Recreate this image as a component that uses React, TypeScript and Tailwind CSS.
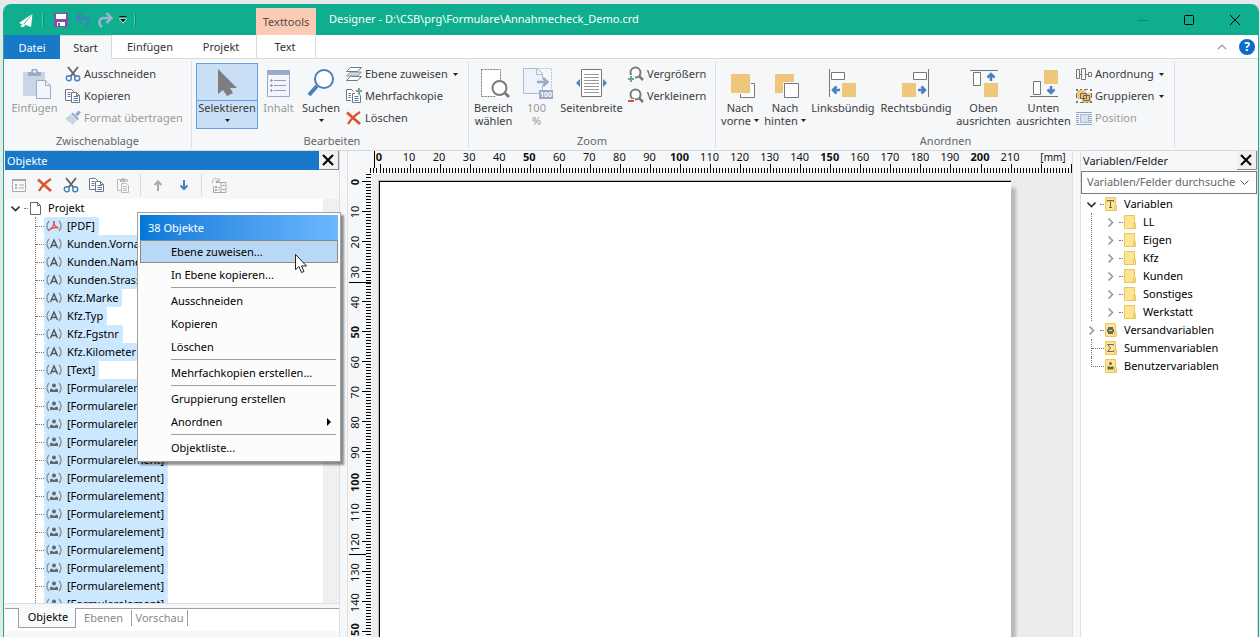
import { ReactNode } from "react";

interface Kids {
    children: ReactNode;
}

interface SvgProps {
    w: number;
    h: number;
    children: ReactNode;
    className?: string;
}

const Svg = ({ w, h, children, className = "" }: SvgProps) => (
    <svg width={w} height={h} viewBox={`0 0 ${w} ${h}`} fill="none" className={`shrink-0 ${className}`} aria-hidden="true">
        {children}
    </svg>
)

/* ---------- icons 16px ---------- */

const Scissors = () => (
    <Svg w={16} h={16}>
        <path d="M3 1l7.5 9.5M13 1L5.5 10.5" stroke="#666" strokeWidth="2" />
        <circle cx="3.8" cy="12.2" r="2.5" stroke="#4a80bd" strokeWidth="1.4" />
        <circle cx="12.2" cy="12.2" r="2.5" stroke="#4a80bd" strokeWidth="1.4" />
    </Svg>
)

const Copy = () => (
    <Svg w={16} h={16}>
        <path d="M6.5 12.5h-6v-11h6l2 2v1" stroke="#777" fill="#fff" />
        <path d="M2.5 4.5h3M2.5 6.5h3M2.5 8.5h3" stroke="#4a80bd" />
        <path d="M6.5 4.5h5l3 3v7h-8z" stroke="#777" fill="#fff" />
        <path d="M11.5 4.5v3h3" stroke="#777" />
        <path d="M8.5 8.5h4.5M8.5 10.5h4.5M8.5 12.5h4.5" stroke="#4a80bd" />
    </Svg>
)

const Brush = () => (
    <Svg w={16} h={16}>
        <path d="M0.5 8.5l5-4 6 6-4 4.5c-1-2-2-2.5-3.5-3z" fill="#c9d3e6" />
        <path d="M6 4l1.5-1.5 6.5 6-1.5 2z" fill="#9aabc9" />
        <path d="M10 4l3.5-3.5 2.5 2L12.5 6.5z" fill="#9aabc9" />
    </Svg>
)

const Layers = () => (
    <Svg w={16} h={16}>
        <path d="M4.5 10.5h11l-4 4h-11z" stroke="#777" fill="#fff" />
        <path d="M4.5 6h11l-4 4h-11z" stroke="#8a97a8" fill="#c5d8ee" />
        <path d="M4.5 1.5h11l-4 4h-11z" stroke="#777" fill="#fff" />
    </Svg>
)

const MultiCopy = () => (
    <Svg w={16} h={16}>
        <path d="M5 12.5H0.5v-11h5l2 2" stroke="#777" fill="#fff" />
        <path d="M2.5 5.5h2.5M2.5 7.5h2.5M2.5 9.5h2.5" stroke="#4a80bd" />
        <path d="M6.5 5.5h5l3 2v7h-8z" stroke="#777" fill="#fff" />
        <path d="M8.5 8.5h4M8.5 10.5h4M8.5 12.5h4" stroke="#4a80bd" />
        <path d="M9 0h7v6H9z" fill="#f5f7f9" />
        <path d="M13 0v6M10 3h6" stroke="#6aa893" strokeWidth="2" />
    </Svg>
)

const RedX = () => (
    <Svg w={16} h={16}>
        <path d="M1 2.5L14 14" stroke="#da5430" strokeWidth="2.8" />
        <path d="M14 2C10 4.500 5 9 2 14" stroke="#da5430" strokeWidth="2.2" />
    </Svg>
)

const ZoomPlus = ({ minus = false }: { minus?: boolean }) => (
    <Svg w={16} h={16}>
        <circle cx="7.5" cy="6.5" r="5" stroke="#7b7b7b" strokeWidth="2" fill="#fff" />
        <path d="M11 10l4 4" stroke="#7b7b7b" strokeWidth="2.5" />
        {minus
            ? <><path d="M0 11h7v5H0z" fill="#f5f7f9" /><path d="M0 13h6" stroke="#da5430" strokeWidth="2" /></>
            : <><path d="M0 9h7v7H0z" fill="#f5f7f9" /><path d="M3 10v6M0 13h6" stroke="#6aa893" strokeWidth="2" /></>}
    </Svg>
)

const Arrange = () => (
    <Svg w={16} h={16}>
        <path d="M0.5 3.5h3v9h-3zM5.5 2.5h4v11h-4zM12.5 6.5h3v4h-3zM3.5 8.5h2M9.5 8.5h3" stroke="#777" />
    </Svg>
)

const GroupIcon = () => (
    <Svg w={16} h={16}>
        <path d="M1 2h9v9H1zM6 5h9v10H6z" fill="#eec77c" />
        <path d="M4.5 5.5h6v5h-6zM7.5 7.5h6v5h-6z" stroke="#6b6458" />
        <path d="M0 1h2v2H0zM14 1h2v2h-2zM0 13h2v2H0zM14 13h2v2h-2zM4 1h2v1H4zM8 1h4v1H8zM4 14h4v1H4zM10 14h2v1h-2zM0 5h1v5H0zM15 5h1v5h-1z" fill="#777" />
    </Svg>
)

const PositionIcon = () => (
    <Svg w={16} h={16}>
        <path d="M0 2.5h16M0 4.5h16M0 6.5h16M0 8.5h16M0 10.5h16M0 12.5h16M0 14.5h16" stroke="#8fa6c9" />
        <path d="M3 4h10v9H3z" fill="#f5f7f9" />
        <path d="M4.5 4.5h8v8h-8z" fill="#d6e1f2" stroke="#a9bbd8" />
    </Svg>
)

const Caret = ({ className = "" }: { className?: string }) => (
    <Svg w={5} h={3} className={className}>
        <path d="M0 0h5L2.5 3z" fill="#222" />
    </Svg>
)

/* ---------- icons 32px ---------- */

const Paste = () => (
    <Svg w={32} h={32}>
        <path d="M4 4h22v10h-9v14H4z" fill="#ccd5e6" />
        <path d="M9 4h3l1-3h5l1 3h3v4H9z" fill="#9aabc9" />
        <path d="M14 2.5h3v2h-3z" fill="#fff" />
        <path d="M17.5 12.5h9l5 5v13h-14z" fill="#f2f5fb" stroke="#9aabc9" />
        <path d="M26.5 12.5v5h5" stroke="#9aabc9" />
    </Svg>
)

const Pointer = () => (
    <Svg w={32} h={32}>
        <path d="M7 1v25l5-4 4 6 6-3-3-5h7z" fill="#7d7d7d" />
    </Svg>
)

const Content = () => (
    <Svg w={32} h={32}>
        <path d="M4.5 2.5h22v26h-22z" fill="#f2f5fb" stroke="#9aabc9" />
        <path d="M4 2h23v5H4z" fill="#9aabc9" />
        <path d="M11 12.5h12M11 17.5h12M11 22.5h12M7 12.5h3M7 17.5h3M7 22.5h3" stroke="#8fa0bf" />
        <path d="M8 11h1v3H8zM8 16h1v3H8zM8 21h1v3H8z" fill="#8fa0bf" />
    </Svg>
)

const Search = () => (
    <Svg w={32} h={32}>
        <circle cx="19" cy="11" r="9" stroke="#4a80bd" strokeWidth="2" fill="#fff" />
        <path d="M12 18L4 27" stroke="#4a80bd" strokeWidth="4" />
    </Svg>
)

const ZoomArea = () => (
    <Svg w={32} h={32}>
        <path d="M3.5 1.5h19v27h-19z" fill="#fff" stroke="#777" strokeDasharray="2 1" />
        <circle cx="22" cy="21" r="9" fill="#fff" />
        <path d="M25 23l6 6" stroke="#7b7b7b" strokeWidth="3" />
        <circle cx="21.5" cy="20" r="7" fill="#fff" stroke="#7b7b7b" strokeWidth="2" />
    </Svg>
)

const ZoomFull = () => (
    <Svg w={32} h={32}>
        <path d="M16 0.5h14.5v21" stroke="#b9c6dd" strokeDasharray="2 1" />
        <path d="M2.5 0.5h14l5 5v20h-19z" fill="#edf2fb" stroke="#a9bbd8" />
        <path d="M15.5 0.5v6h6" stroke="#a9bbd8" />
        <path d="M16 10h12v8H16z" fill="#edf2fb" />
        <path d="M16 14h10M22 10l4.5 4-4.5 4" stroke="#9aabc9" strokeWidth="2.5" />
        <path d="M18 22h14v9H18z" fill="#9aabc9" />
        <text x="25" y="29" fontSize="7" fontWeight="700" fill="#fff" textAnchor="middle">100</text>
    </Svg>
)

const PageWidth = () => (
    <Svg w={32} h={32}>
        <path d="M5.5 1.5h20v27h-20z" fill="#fff" stroke="#777" />
        <path d="M8 6.5h15M8 9.5h15M8 12.5h15M8 15.5h15M8 18.5h15M8 21.5h15M8 24.5h15" stroke="#9a9a9a" />
        <path d="M4 11v8l-4-4zM27 11v8l4-4z" fill="#4a80bd" />
    </Svg>
)

const ToFront = () => (
    <Svg w={32} h={32}>
        <path d="M16.5 15.5h14v14h-14z" fill="#fff" stroke="#777" />
        <path d="M7 6h20v20H7z" fill="#f5f7f9" />
        <path d="M7 6h19v19H7z" fill="#eec77c" />
    </Svg>
)

const ToBack = () => (
    <Svg w={32} h={32}>
        <path d="M6 6h19v19H6z" fill="#eec77c" />
        <path d="M14 14h12v12H14z" fill="#f5f7f9" />
        <path d="M15.5 15.5h14v14h-14z" fill="#fff" stroke="#777" />
    </Svg>
)

const AlignLeft = () => (
    <Svg w={32} h={32}>
        <path d="M2.5 1v28" stroke="#777" />
        <path d="M4.5 4.5h13v7h-13z" stroke="#777" fill="#fff" />
        <path d="M15 15h14v14H15z" fill="#eec77c" />
        <path d="M13 22H6M9.5 18.5L6 22l3.5 3.5" stroke="#4a80bd" strokeWidth="2.5" />
    </Svg>
)

const AlignRight = () => (
    <Svg w={32} h={32}>
        <path d="M28.5 1v28" stroke="#777" />
        <path d="M13.5 4.5h13v7h-13z" stroke="#777" fill="#fff" />
        <path d="M2 15h14v14H2z" fill="#eec77c" />
        <path d="M18 22h7M21.5 18.5L25 22l-3.5 3.5" stroke="#4a80bd" strokeWidth="2.5" />
    </Svg>
)

const AlignTop = () => (
    <Svg w={32} h={32}>
        <path d="M2 2.5h28" stroke="#777" />
        <path d="M5.5 4.5h7v13h-7z" stroke="#777" fill="#fff" />
        <path d="M16 15h14v14H16z" fill="#eec77c" />
        <path d="M23 13V6M19.5 9.5L23 6l3.5 3.5" stroke="#4a80bd" strokeWidth="2.5" />
    </Svg>
)

const AlignBottom = () => (
    <Svg w={32} h={32}>
        <path d="M2 28.5h28" stroke="#777" />
        <path d="M5.5 13.5h7v13h-7z" stroke="#777" fill="#fff" />
        <path d="M16 2h14v14H16z" fill="#eec77c" />
        <path d="M23 18v7M19.5 21.5L23 25l3.5-3.5" stroke="#4a80bd" strokeWidth="2.5" />
    </Svg>
)

/* ---------- ribbon ---------- */

interface BigProps {
    icon: ReactNode;
    lines: string[];
    width: string;
    caret?: "below" | "inline";
    disabled?: boolean;
    active?: boolean;
}

const BigButton = ({ icon, lines, width, caret, disabled, active }: BigProps) => (
    <button
        disabled={disabled}
        className={`flex flex-col items-center h-[66px] shrink-0 whitespace-nowrap leading-[13px] border ${width} ${disabled ? "text-[#9a9a9a]" : "text-[#3c3c3c]"} ${active ? "bg-[#c9dff6] border-[#62a2e4]" : "border-transparent"}`}
    >
        <span className="pt-1">{icon}</span>
        <span className={`w-full flex flex-col items-center border-t ${active ? "border-[#62a2e4]" : "border-transparent"}`}>
            {lines.map((line, i) => (
                <span key={line} className="flex items-center gap-[3px]">
                    {line}
                    {caret === "inline" && i === lines.length - 1 && <Caret />}
                </span>
            ))}
            {caret === "below" && <Caret className="mt-[5px]" />}
        </span>
    </button>
)

interface SmallProps {
    icon: ReactNode;
    label: string;
    caret?: boolean;
    disabled?: boolean;
}

const SmallButton = ({ icon, label, caret, disabled }: SmallProps) => (
    <button disabled={disabled} className={`flex items-center gap-[3px] h-[22px] whitespace-nowrap ${disabled ? "text-[#9a9a9a]" : "text-[#3c3c3c]"}`}>
        {icon}
        <span>{label}</span>
        {caret && <Caret className="ml-[2px]" />}
    </button>
)

interface GroupProps extends Kids {
    label: string;
    className: string;
}

const Group = ({ label, className, children }: GroupProps) => (
    <section aria-label={label} className={`flex flex-col border-r border-[#dcdfe3] h-[87px] shrink-0 ${className}`}>
        <div className="flex pt-[2px] h-[72px] shrink-0">{children}</div>
        <div className="text-center text-[#666] leading-[15px]">{label}</div>
    </section>
)

const Ribbon = () => (
    <div className="flex h-[92px] pt-[2px] bg-[#f5f7f9] border-b border-[#d8dadc] overflow-hidden">
        <Group label="Zwischenablage" className="w-[188px]">
            <BigButton icon={<Paste />} lines={["Einfügen"]} width="w-[61px]" disabled />
            <div className="flex flex-col">
                <SmallButton icon={<Scissors />} label="Ausschneiden" />
                <SmallButton icon={<Copy />} label="Kopieren" />
                <SmallButton icon={<Brush />} label="Format übertragen" disabled />
            </div>
        </Group>
        <Group label="Bearbeiten" className="w-[277px] pl-1">
            <BigButton icon={<Pointer />} lines={["Selektieren"]} width="w-[62px]" caret="below" active />
            <BigButton icon={<Content />} lines={["Inhalt"]} width="w-[41px]" disabled />
            <BigButton icon={<Search />} lines={["Suchen"]} width="w-[44px]" caret="below" />
            <div className="flex flex-col pl-[3px]">
                <SmallButton icon={<Layers />} label="Ebene zuweisen" caret />
                <SmallButton icon={<MultiCopy />} label="Mehrfachkopie" />
                <SmallButton icon={<RedX />} label="Löschen" />
            </div>
        </Group>
        <Group label="Zoom" className="w-[247px]">
            <BigButton icon={<ZoomArea />} lines={["Bereich", "wählen"]} width="w-[49px]" />
            <BigButton icon={<ZoomFull />} lines={["100", "%"]} width="w-[37px]" disabled />
            <BigButton icon={<PageWidth />} lines={["Seitenbreite"]} width="w-[73px]" />
            <div className="flex flex-col">
                <SmallButton icon={<ZoomPlus />} label="Vergrößern" />
                <SmallButton icon={<ZoomPlus minus />} label="Verkleinern" />
            </div>
        </Group>
        <Group label="Anordnen" className="w-[459px] pl-px">
            <BigButton icon={<ToFront />} lines={["Nach", "vorne"]} width="w-[46px]" caret="inline" />
            <BigButton icon={<ToBack />} lines={["Nach", "hinten"]} width="w-[44px]" caret="inline" />
            <BigButton icon={<AlignLeft />} lines={["Linksbündig"]} width="w-[72px]" />
            <BigButton icon={<AlignRight />} lines={["Rechtsbündig"]} width="w-[74px]" />
            <BigButton icon={<AlignTop />} lines={["Oben", "ausrichten"]} width="w-[61px]" />
            <BigButton icon={<AlignBottom />} lines={["Unten", "ausrichten"]} width="w-[59px]" />
            <div className="flex flex-col pl-[3px]">
                <SmallButton icon={<Arrange />} label="Anordnung" caret />
                <SmallButton icon={<GroupIcon />} label="Gruppieren" caret />
                <SmallButton icon={<PositionIcon />} label="Position" disabled />
            </div>
        </Group>
    </div>
)

const TitleBar = () => (
    <header className="flex items-center h-[31px] bg-[#0eae8f] text-white rounded-t-[7px] overflow-hidden">
        <div className="flex items-center w-[252px] pl-[15px] shrink-0">
            <Svg w={16} h={16}>
                <path d="M13 2L0 11l4 1.500z" fill="#fff" />
                <path d="M13.500 2L5 12.500 12 15z" fill="#fff" />
                <path d="M1 14.500l3-3 2 2-1 1.500z" fill="#fff" />
            </Svg>
            <span className="ml-[7px] mr-[9px] w-[2px] h-3 bg-[#59c6b0] border-r border-[#0b8d74]" />
            <button aria-label="Speichern">
                <Svg w={16} h={16}>
                    <path d="M1 1h14v14H1z" fill="#8250a8" />
                    <path d="M3 2h10v5H3zM4 10h8v4H4z" fill="#fff" />
                    <path d="M5 11h2v3H5z" fill="#8250a8" />
                </Svg>
            </button>
            <button aria-label="Rückgängig" className="ml-[6px]">
                <Svg w={16} h={16}>
                    <path d="M2 6h7c5.5 0 6 6 2 9" stroke="#3f82bd" strokeWidth="2.5" />
                    <path d="M6.5 1L1.500 6l5 5" stroke="#3f82bd" strokeWidth="2.5" />
                </Svg>
            </button>
            <button aria-label="Wiederholen" className="ml-[6px]">
                <Svg w={16} h={16}>
                    <path d="M14 6H7c-5.500 0-6 6-2 9" stroke="#9ab3d4" strokeWidth="2.5" />
                    <path d="M9.500 1l5 5-5 5" stroke="#9ab3d4" strokeWidth="2.5" />
                </Svg>
            </button>
            <button aria-label="Symbolleiste anpassen" className="ml-[6px]">
                <Svg w={8} h={8}>
                    <path d="M0.5 2.5h7v1L4 7.500 0.500 3.500z" fill="#fff" />
                    <path d="M0.500 0h7v1h-7zM1 3h6L4 6.500z" fill="#111" />
                </Svg>
            </button>
            <span className="ml-[7px] w-[2px] h-3 bg-[#59c6b0] border-r border-[#0b8d74]" />
        </div>
        <div className="self-end w-[60px] h-[27px] bg-[#fbcbb5] text-[#5a4a44] text-center leading-[28px] shrink-0">Texttools</div>
        <h1 className="pl-[13px] whitespace-nowrap flex-1">Designer - D:\CSB\prg\Formulare\Annahmecheck_Demo.crd</h1>
        <button aria-label="Minimieren" className="w-[46px] flex justify-center">
            <Svg w={12} h={12}><path d="M1 6.5h10" stroke="#0a8a71" /></Svg>
        </button>
        <button aria-label="Maximieren" className="w-[46px] flex justify-center">
            <Svg w={12} h={12}><rect x="1.5" y="1.5" width="9" height="9" rx="1" stroke="#000" /></Svg>
        </button>
        <button aria-label="Schließen" className="w-[46px] flex justify-center">
            <Svg w={12} h={12}><path d="M1 1l10 10M11 1L1 11" stroke="#000" /></Svg>
        </button>
    </header>
)

const TabRow = () => (
    <nav className="flex h-6 bg-white text-[#333] text-center leading-[23px]">
        <button className="w-[56px] bg-[#1a78c9] text-white">Datei</button>
        <button className="w-[52px] bg-[#f5f7f9] border-t border-r border-[#d8dadc]">Start</button>
        <button className="w-[76px] border-b border-[#d8dadc]">Einfügen</button>
        <button className="w-[66px] border-b border-[#d8dadc]">Projekt</button>
        <span className="w-[2px] border-b border-[#d8dadc]" />
        <button className="w-[60px] pr-[2px] border-b border-x border-[#d8dadc]">Text</button>
        <div className="flex-1 flex items-center justify-end gap-3 pr-[3px] border-b border-[#d8dadc]">
            <button aria-label="Menüband minimieren">
                <Svg w={10} h={6}><path d="M1 5l4-4 4 4" stroke="#999" strokeWidth="1.2" /></Svg>
            </button>
            <button aria-label="Hilfe" className="w-4 h-4 rounded-full bg-[#0a6ccb] text-white font-bold text-[12px] leading-4">?</button>
        </div>
    </nav>
)

/* ---------- object panel ---------- */

type nodeT = {
    label: string,
    kind: "pdf" | "text" | "form",
}

const objects: nodeT[] = [
    { label: "[PDF]", kind: "pdf" },
    { label: "Kunden.Vorname", kind: "text" },
    { label: "Kunden.Name", kind: "text" },
    { label: "Kunden.Strasse", kind: "text" },
    { label: "Kfz.Marke", kind: "text" },
    { label: "Kfz.Typ", kind: "text" },
    { label: "Kfz.Fgstnr", kind: "text" },
    { label: "Kfz.Kilometer", kind: "text" },
    { label: "[Text]", kind: "text" },
    ...Array.from({ length: 13 }, (): nodeT => ({ label: "[Formularelement]", kind: "form" })),
]

const ObjectIcon = ({ kind }: { kind: nodeT["kind"] }) => (
    <Svg w={16} h={16}>
        <path d="M3 3C0.5 6 0.5 10 3 13M13 3c2.5 3 2.5 7 0 10" stroke="#888" strokeWidth="1.2" />
        {kind === "pdf" && <path d="M8 3.5c-1.5 0 0 5 4.5 6.5M8 3.5c1 0-1 7-4.5 8.5 0-1.5 4-3 9-2" stroke="#e8434a" strokeWidth="1.2" />}
        {kind === "text" && <path d="M4.5 12L8 4l3.5 8M5.8 9.5h4.4" stroke="#555" strokeWidth="1.4" />}
        {kind === "form" && <><circle cx="8" cy="5.500" r="2" fill="#666" /><path d="M4 12V9.5l1.5-1 2.5 1.5 2.5-1.5 1.5 1V12z" fill="#666" /></>}
    </Svg>
)

const CloseBox = () => (
    <button aria-label="Schließen" className="w-5 h-[19px] pr-px shrink-0 flex items-center justify-center bg-[#f0f0f0] border-r border-b border-[#888]">
        <Svg w={12} h={12}><path d="M1 1l10 10M11 1L1 11" stroke="#000" strokeWidth="2" /></Svg>
    </button>
)

const ToolButton = ({ label, children }: Kids & { label: string }) => (
    <button aria-label={label} className="w-[26px] flex justify-center">{children}</button>
)

const ObjectToolbar = () => (
    <div className="flex items-center h-[29px] bg-[#f5f7f9] pl-px">
        <ToolButton label="Eigenschaften">
            <Svg w={16} h={16}>
                <path d="M1.5 2.5h13v12h-13z" stroke="#aaa" fill="#f8f8f8" />
                <path d="M1 2h14v2H1zM4 7h2v2H4zM4 10h2v2H4z" fill="#aaa" />
                <path d="M8 8h5M8 11h5" stroke="#aaa" />
            </Svg>
        </ToolButton>
        <ToolButton label="Löschen"><RedX /></ToolButton>
        <ToolButton label="Ausschneiden"><Scissors /></ToolButton>
        <ToolButton label="Kopieren"><Copy /></ToolButton>
        <ToolButton label="Einfügen">
            <Svg w={16} h={16}>
                <path d="M6 13.5H2.5v-11h10V5" stroke="#bbb" />
                <path d="M5 3h1l1-2h2l1 2h1v2H5z" fill="#bbb" />
                <path d="M6.5 6.5h5l2 2v7h-7zM8 9.5h4M8 11.5h4M8 13.5h4" stroke="#bbb" fill="#f8f8f8" />
            </Svg>
        </ToolButton>
        <span className="w-px h-[22px] mx-1 bg-[#d8dadc]" />
        <ToolButton label="Nach oben">
            <Svg w={16} h={16}><path d="M8 14V5M4.5 8L8 4.5 11.5 8" stroke="#aaa" strokeWidth="2" /></Svg>
        </ToolButton>
        <ToolButton label="Nach unten">
            <Svg w={16} h={16}><path d="M8 3v9M4.5 8.5L8 12l3.5-3.5" stroke="#4a80bd" strokeWidth="2" /></Svg>
        </ToolButton>
        <span className="w-px h-[22px] mx-1 bg-[#d8dadc]" />
        <ToolButton label="Ebenen">
            <Svg w={16} h={16}>
                <path d="M5 5.5h10v10H2.5V9M1 6l1.5-3.5C4 0.5 6 1.5 7 4M8 1v3.5H4.5M10 5v10" stroke="#aaa" />
                <path d="M4 9h2v2H4zM4 12h2v2H4z" fill="#aaa" />
                <path d="M7 10.5h2M7 13h2M11 8.5h3M11 12.5h3" stroke="#aaa" />
            </Svg>
        </ToolButton>
    </div>
)

const Chevron = ({ open = false }: { open?: boolean }) => (
    <Svg w={9} h={9}>
        {open
            ? <path d="M0.5 2.5l4 4 4-4" stroke="#333" strokeWidth="1.6" />
            : <path d="M2.5 0.5l4 4-4 4" stroke="#999" strokeWidth="1.6" />}
    </Svg>
)

const menu: string[][] = [
    ["Ebene zuweisen...", "In Ebene kopieren..."],
    ["Ausschneiden", "Kopieren", "Löschen"],
    ["Mehrfachkopien erstellen..."],
    ["Gruppierung erstellen", "Anordnen"],
    ["Objektliste..."],
]

const ContextMenu = () => (
    <div role="menu" className="absolute left-[133px] top-[61px] z-20 w-[204px] p-[2px] bg-[#fcfcfc] border border-[#a0a0a0] shadow-[3px_3px_2px_#00000070]">
        <div className="h-[25px] pl-2 leading-[25px] text-white bg-linear-to-r from-[#0078d7] to-[#6bb8ff]">38 Objekte</div>
        {menu.map((items, s) => (
            <div key={s}>
                {s > 0 && <div className="h-[3px] ml-[31px] mr-[2px] flex items-center"><span className="h-px w-full bg-[#a0a0a0]" /></div>}
                {items.map((item, i) => (
                    <button
                        key={item}
                        role="menuitem"
                        className={`flex w-full items-center justify-between h-[23px] pt-px pl-[30px] pr-[6px] border text-black ${s === 0 && i === 0 ? "bg-[#b9d8f5] border-[#888]" : "border-transparent"}`}
                    >
                        {item}
                        {item === "Anordnen" && <Svg w={4} h={8}><path d="M0 0v8l4-4z" fill="#000" /></Svg>}
                    </button>
                ))}
            </div>
        ))}
        <Svg w={12} h={20} className="absolute left-[157px] top-[41px]">
            <path d="M0.5 0.5v15l3.5-3 2.5 6 2.5-1-2.5-5.5h5z" fill="#fff" stroke="#222" />
        </Svg>
    </div>
)

const ObjectPanel = () => (
    <aside className="relative w-[336px] shrink-0 flex flex-col pl-px border-r border-[#dcdfe3]">
        <div className="flex justify-between bg-[#1a78c9] text-white h-[19px]">
            <h2 className="pl-[2px] leading-[19px]">Objekte</h2>
            <CloseBox />
        </div>
        <ObjectToolbar />
        <div className="flex-1 min-h-0 flex bg-white">
            <div className="flex-1 overflow-hidden">
                <div className="flex items-center h-[18px] pl-[6px]">
                    <Chevron open />
                    <span className="w-1 ml-1 border-t border-dotted border-[#777]" />
                    <Svg w={12} h={15} className="ml-[2px]">
                        <path d="M0.5 1.5h7l3 3v9h-10zM7.5 1.5v3h3" stroke="#666" fill="#fff" />
                    </Svg>
                    <span className="pl-[6px]">Projekt</span>
                </div>
                <ul className="ml-[30px] border-l border-dotted border-[#777]">
                    {objects.map((obj, i) => (
                        <li key={i} className="flex items-center h-[18px]">
                            <span className="w-2 border-t border-dotted border-[#777]" />
                            <button className="flex items-center h-[18px] gap-[5px] pl-[2px] pr-1 rounded-[2px] bg-[#cce8ff] whitespace-nowrap">
                                <ObjectIcon kind={obj.kind} />
                                {obj.label}
                            </button>
                        </li>
                    ))}
                </ul>
            </div>
            <div className="w-4 bg-[#f0f0f0]" />
        </div>
        <div className="h-[5px] bg-[#f5f7f9] border-t border-[#dcdfe3]" />
        <div className="flex items-start h-[23px] mb-[6px] bg-white border-t border-[#a0a0a0] pl-[13px]">
            <button className="-mt-px w-[58px] h-5 pl-[2px] bg-[#f9fafb] border-x border-b border-[#a0a0a0]">Objekte</button>
            <button className="w-[56px] h-4 mt-px leading-4 text-[#888] border-r border-[#a0a0a0]">Ebenen</button>
            <button className="w-[56px] h-4 mt-px leading-4 text-[#888] border-r border-[#a0a0a0]">Vorschau</button>
        </div>
        <ContextMenu />
    </aside>
)

/* ---------- drawing area ---------- */

// pixels on screen per millimetre of paper
const MM = 3.005;

const tickPath = (from: number, to: number, zero: number, edge: number, vertical: boolean) => {
    let d = "";
    for (let n = from; n <= to; n++) {
        const p = Math.floor(zero + n * MM) + 0.5;
        const len = n % 10 === 0 ? 9 : 5;
        d += vertical ? `M${edge - len} ${p}h${len}` : `M${p} ${edge - len}v${len}`;
    }
    return d;
}

const TopRuler = () => (
    <div className="h-[23px] bg-[#f5f7f9]">
        <Svg w={724} h={23} className="overflow-visible">
            <path d={tickPath(-3, 230, 32, 22, false)} stroke="#000" />
            <path d="M26.5 0v17" stroke="#000" />
            {Array.from({ length: 22 }, (_, i) => i * 10).map((n) => (
                <text key={n} x={31 + n * MM} y="10" fontSize="11" textAnchor="middle" fontWeight={n % 50 === 0 ? 700 : 400} fill="#111">{n}</text>
            ))}
            <text x="705" y="10" fontSize="10" textAnchor="middle" fill="#111">[mm]</text>
        </Svg>
    </div>
)

const SideRuler = () => (
    <div className="w-6 shrink-0 overflow-hidden bg-[#f5f7f9]">
        <Svg w={24} h={463}>
            <path d={tickPath(-2, 151, 7, 23, true)} stroke="#000" />
            <path d="M1 108.5h22M1 380.5h17" stroke="#000" />
            {Array.from({ length: 16 }, (_, i) => i * 10).map((n) => (
                <text
                    key={n}
                    transform={`translate(11 ${8 + n * MM}) rotate(-90)`}
                    fontSize="11"
                    textAnchor="middle"
                    fontWeight={n % 50 === 0 ? 700 : 400}
                    fill="#111"
                >
                    {n}
                </text>
            ))}
        </Svg>
    </div>
)

const Workspace = () => (
    <main className="ml-[7px] flex-1 min-w-0 flex flex-col border-x border-[#dcdfe3]">
        <TopRuler />
        <div className="flex flex-1 min-h-0">
            <SideRuler />
            <div className="flex-1 overflow-hidden bg-[#ececec] pt-[6px] pl-[6px]">
                <div className="w-[633px] h-[900px] border-t border-l border-[#bbb] shadow-[5px_8px_3px_#b8b8b8]">
                    <div className="h-full bg-white border-t border-l border-black" />
                </div>
            </div>
        </div>
    </main>
)

/* ---------- variables panel ---------- */

const Folder = ({ children }: { children?: ReactNode }) => (
    <Svg w={12} h={14}>
        <path d="M0.5 0.5h10v13h-10z" fill="#ffe491" stroke="#ecc65a" />
        <path d="M9.5 8.5h2v5h-2z" fill="#ffe491" stroke="#ecc65a" />
        {children}
    </Svg>
)

const RootRow = ({ label, state, last, children }: Kids & { label: string, state?: "open" | "closed", last?: boolean }) => (
    <div className="flex items-center h-[18px]">
        {state
            ? <><Chevron open={state === "open"} /><span className="ml-1 w-1 border-t border-dotted border-[#777]" /></>
            : <span className={`ml-1 w-[13px] border-l border-dotted border-[#777] ${last ? "self-start h-[10px] border-b" : "h-[18px] flex items-center"}`}>
                {!last && <span className="w-full border-t border-dotted border-[#777]" />}
            </span>}
        <span className="ml-px"><Folder>{children}</Folder></span>
        <span className="pl-[7px]">{label}</span>
    </div>
)

const VariablePanel = () => (
    <aside className="ml-[7px] w-[178px] shrink-0 flex flex-col bg-white border-x border-[#dcdfe3]">
        <div className="flex justify-between h-[19px] bg-[#f5f7f9]">
            <h2 className="pl-[2px] leading-[19px] text-[#222]">Variablen/Felder</h2>
            <CloseBox />
        </div>
        <div className="flex items-center h-[23px] mt-px bg-white border border-[#7a7a7a]">
            <input
                aria-label="Variablen/Felder durchsuchen"
                placeholder="Variablen/Felder durchsuchen"
                className="flex-1 min-w-0 pl-[5px] pr-1 outline-none placeholder:text-[#666]"
            />
            <button aria-label="Suchverlauf" className="w-4 shrink-0">
                <Svg w={9} h={6}><path d="M0.5 0.5l4 4 4-4" stroke="#555" /></Svg>
            </button>
        </div>
        <div className="pl-[6px] pt-px">
            <RootRow label="Variablen" state="open">
                <path d="M2.5 5V3.5h6V5M5.5 3.5v7M4 10.5h3" stroke="#666" />
            </RootRow>
            <ul className="ml-1 border-l border-dotted border-[#777]">
                {["LL", "Eigen", "Kfz", "Kunden", "Sonstiges", "Werkstatt"].map((name) => (
                    <li key={name} className="flex items-center h-[18px] pl-[14px]">
                        <Chevron />
                        <span className="ml-1 w-1 mr-px border-t border-dotted border-[#777]" />
                        <Folder />
                        <span className="pl-[7px]">{name}</span>
                    </li>
                ))}
            </ul>
            <RootRow label="Versandvariablen" state="closed">
                <path d="M3 4h5v7H3zM2 6h7v3H2z" fill="#666" />
                <path d="M4 7h3v1H4z" fill="#ffe491" />
            </RootRow>
            <RootRow label="Summenvariablen">
                <path d="M8.5 4.5V3.5h-6l3 3.5-3 3.5h6V9.5" stroke="#666" />
            </RootRow>
            <RootRow label="Benutzervariablen" last>
                <circle cx="5.5" cy="4.5" r="1.5" fill="#666" />
                <path d="M2.5 10.5V8l1-1 2 1 2-1 1 1v2.5z" fill="#666" />
            </RootRow>
        </div>
    </aside>
)

const App = () => {
  return (
    <div className="h-screen overflow-hidden flex flex-col bg-[#e8e8e8] pt-1 pl-[3px] pr-px font-['Noto_Sans','Open_Sans',sans-serif] text-[11px] text-black">
        <div className="flex-1 min-h-0 flex flex-col border-x border-[#0eae8f] bg-[#f5f7f9] rounded-t-lg">
            <TitleBar />
            <TabRow />
            <Ribbon />
            <div className="flex-1 min-h-0 flex">
                <ObjectPanel />
                <Workspace />
                <VariablePanel />
            </div>
        </div>
    </div>
  )
}

export default App
